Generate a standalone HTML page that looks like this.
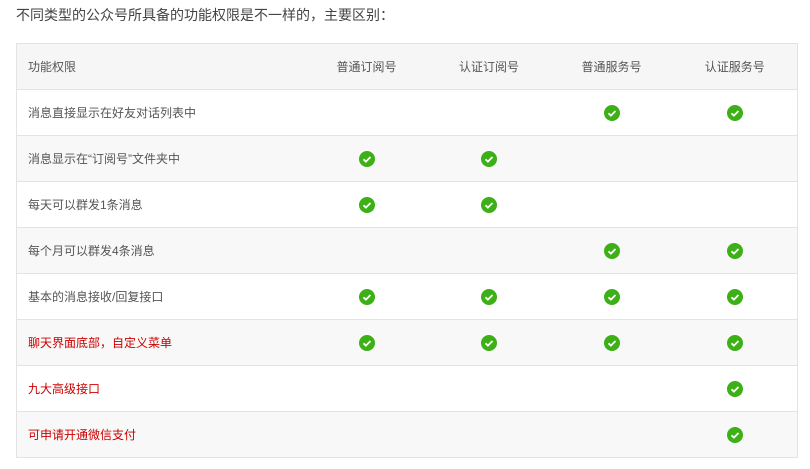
<!DOCTYPE html>
<html><head><meta charset="utf-8"><style>
body{margin:0;background:#fff;font-family:"Liberation Sans","Noto Sans CJK SC",sans-serif;color:#555;width:810px;height:469px;overflow:hidden;position:relative}
.t{position:absolute;left:16px;top:5px;font-size:14px;line-height:20px;color:#444}
table{position:absolute;left:16px;top:43px;border-collapse:collapse;width:781px;font-size:12px;table-layout:fixed;border-left:1px solid #e3e3e3;border-right:1px solid #e3e3e3}
td{border-top:1px solid #e3e3e3;border-bottom:1px solid #e3e3e3;height:45px;padding:0;text-align:center;vertical-align:middle}
td:first-child{text-align:left;padding-left:11px}
tr:nth-child(odd){background:#f8f8f8}
tr:first-child{background:#f6f6f6}
.r td:first-child{color:#c00}
.c{display:inline-block;width:16px;height:16px;border-radius:50%;background:#3daf17;position:relative;vertical-align:middle}
.c svg{position:absolute;left:0;top:0}
</style></head><body>
<div class="t">不同类型的公众号所具备的功能权限是不一样的，主要区别：</div>
<table>
<colgroup><col style="width:289px"><col style="width:122px"><col style="width:123px"><col style="width:122px"><col style="width:125px"></colgroup>
<tr><td>功能权限</td><td>普通订阅号</td><td>认证订阅号</td><td>普通服务号</td><td>认证服务号</td></tr>
<tr><td>消息直接显示在好友对话列表中</td><td></td><td></td><td><i class="c"><svg width="16" height="16"><path d="M4.5 8.3l2.4 2.3 4.6-4.6" stroke="#fff" stroke-width="1.8" fill="none"/></svg></i></td><td><i class="c"><svg width="16" height="16"><path d="M4.5 8.3l2.4 2.3 4.6-4.6" stroke="#fff" stroke-width="1.8" fill="none"/></svg></i></td></tr>
<tr><td>消息显示在“订阅号”文件夹中</td><td><i class="c"><svg width="16" height="16"><path d="M4.5 8.3l2.4 2.3 4.6-4.6" stroke="#fff" stroke-width="1.8" fill="none"/></svg></i></td><td><i class="c"><svg width="16" height="16"><path d="M4.5 8.3l2.4 2.3 4.6-4.6" stroke="#fff" stroke-width="1.8" fill="none"/></svg></i></td><td></td><td></td></tr>
<tr><td>每天可以群发1条消息</td><td><i class="c"><svg width="16" height="16"><path d="M4.5 8.3l2.4 2.3 4.6-4.6" stroke="#fff" stroke-width="1.8" fill="none"/></svg></i></td><td><i class="c"><svg width="16" height="16"><path d="M4.5 8.3l2.4 2.3 4.6-4.6" stroke="#fff" stroke-width="1.8" fill="none"/></svg></i></td><td></td><td></td></tr>
<tr><td>每个月可以群发4条消息</td><td></td><td></td><td><i class="c"><svg width="16" height="16"><path d="M4.5 8.3l2.4 2.3 4.6-4.6" stroke="#fff" stroke-width="1.8" fill="none"/></svg></i></td><td><i class="c"><svg width="16" height="16"><path d="M4.5 8.3l2.4 2.3 4.6-4.6" stroke="#fff" stroke-width="1.8" fill="none"/></svg></i></td></tr>
<tr><td>基本的消息接收/回复接口</td><td><i class="c"><svg width="16" height="16"><path d="M4.5 8.3l2.4 2.3 4.6-4.6" stroke="#fff" stroke-width="1.8" fill="none"/></svg></i></td><td><i class="c"><svg width="16" height="16"><path d="M4.5 8.3l2.4 2.3 4.6-4.6" stroke="#fff" stroke-width="1.8" fill="none"/></svg></i></td><td><i class="c"><svg width="16" height="16"><path d="M4.5 8.3l2.4 2.3 4.6-4.6" stroke="#fff" stroke-width="1.8" fill="none"/></svg></i></td><td><i class="c"><svg width="16" height="16"><path d="M4.5 8.3l2.4 2.3 4.6-4.6" stroke="#fff" stroke-width="1.8" fill="none"/></svg></i></td></tr>
<tr class="r"><td>聊天界面底部，自定义菜单</td><td><i class="c"><svg width="16" height="16"><path d="M4.5 8.3l2.4 2.3 4.6-4.6" stroke="#fff" stroke-width="1.8" fill="none"/></svg></i></td><td><i class="c"><svg width="16" height="16"><path d="M4.5 8.3l2.4 2.3 4.6-4.6" stroke="#fff" stroke-width="1.8" fill="none"/></svg></i></td><td><i class="c"><svg width="16" height="16"><path d="M4.5 8.3l2.4 2.3 4.6-4.6" stroke="#fff" stroke-width="1.8" fill="none"/></svg></i></td><td><i class="c"><svg width="16" height="16"><path d="M4.5 8.3l2.4 2.3 4.6-4.6" stroke="#fff" stroke-width="1.8" fill="none"/></svg></i></td></tr>
<tr class="r"><td>九大高级接口</td><td></td><td></td><td></td><td><i class="c"><svg width="16" height="16"><path d="M4.5 8.3l2.4 2.3 4.6-4.6" stroke="#fff" stroke-width="1.8" fill="none"/></svg></i></td></tr>
<tr class="r"><td>可申请开通微信支付</td><td></td><td></td><td></td><td><i class="c"><svg width="16" height="16"><path d="M4.5 8.3l2.4 2.3 4.6-4.6" stroke="#fff" stroke-width="1.8" fill="none"/></svg></i></td></tr>
</table>
</body></html>
